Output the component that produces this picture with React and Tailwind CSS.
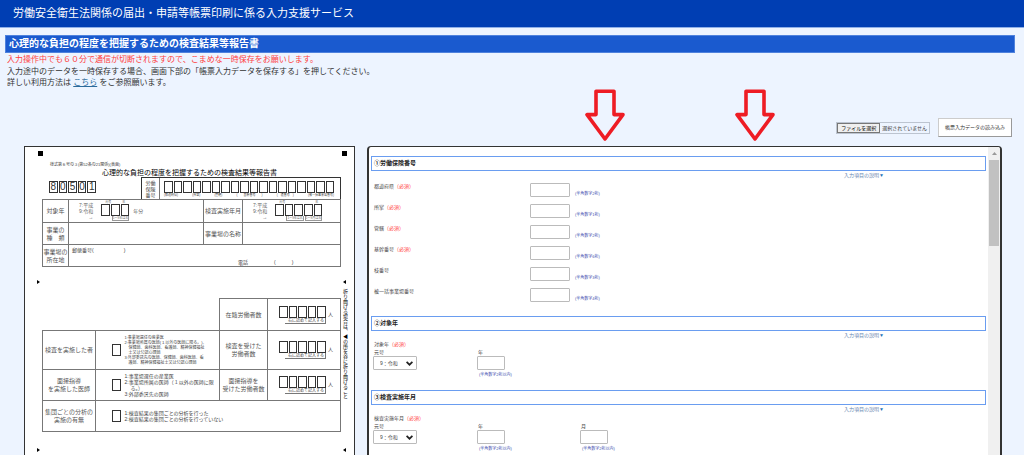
import React from 'react';

const INSURANCE_FIELDS = [
  { id: 'pref', label: '都道府県', required: true, hint: '(半角数字2桁)' },
  { id: 'shosho', label: '所掌', required: true, hint: '(半角数字1桁)' },
  { id: 'kankatsu', label: '管轄', required: true, hint: '(半角数字2桁)' },
  { id: 'kikan', label: '基幹番号', required: true, hint: '(半角数字6桁)' },
  { id: 'eda', label: '枝番号', required: false, hint: '(半角数字3桁)' },
  { id: 'ikkatsu', label: '被一括事業場番号', required: false, hint: '(半角数字4桁)' },
];

function DigitBoxes({ count, digits = '' }) {
  return (
    <div className="flex gap-px">
      {Array.from({ length: count }, (_, i) => (
        <span
          key={i}
          className="flex h-3 min-w-0 flex-1 items-center justify-center border border-[#333] text-[10px] leading-none text-[#333]"
        >
          {digits[i]}
        </span>
      ))}
    </div>
  );
}

function DownArrow({ className }) {
  return (
    <svg className={className} viewBox="0 0 40 53" fill="none" stroke="#ee1c24" strokeWidth="3.6" strokeLinejoin="round">
      <path d="M11 2.2H29V25.6H38L20 50L2 25.6H11Z" />
    </svg>
  );
}

function CornerSquares() {
  return (
    <div className="flex justify-between pr-[7px] pl-[13px] pt-1">
      <span className="size-[5px] bg-black"></span>
      <span className="size-[5px] bg-black"></span>
    </div>
  );
}

function FoldMarks() {
  return (
    <div className="flex justify-between pr-2 pl-3">
      <svg className="h-1 w-[3px]" viewBox="0 0 3 4"><path d="M0 0L3 2L0 4Z" /></svg>
      <svg className="h-1 w-[3px]" viewBox="0 0 3 4"><path d="M3 0L0 2L3 4Z" /></svg>
    </div>
  );
}

function EraBox({ count, children }) {
  return (
    <div className="flex items-center gap-2 pl-[10px] text-[5px] leading-[6px] text-[#666]">
      <div>
        7:平成<br />9:令和<br />
        <span className="block text-right">→</span>
      </div>
      <div className={count === 3 ? 'w-7' : 'w-[47px]'}>
        <div className="flex justify-between px-1 text-[3px] leading-[3px]">
          <span>元号</span>
          <span>年</span>
        </div>
        <DigitBoxes count={count} />
        <div className="flex justify-end gap-px text-[3px] leading-[4px]">
          <span className="border-x border-b border-[#999]">1〜9年は右</span>
          {count === 5 && <span className="border-x border-b border-[#999]">1〜9月は右</span>}
        </div>
      </div>
      {children}
    </div>
  );
}

function CountBox() {
  return (
    <div className="flex items-center gap-[2px] pl-[11px] text-[4px]">
      <div className="w-[47px]">
        <DigitBoxes count={5} />
        <div className="ml-[6px] border-r border-b border-[#777] pr-px text-right text-[4px] leading-[5px]">右に詰めて記入する</div>
      </div>
      <span className="text-[5px]">人</span>
    </div>
  );
}

function FormPreview() {
  const cell = 'border border-[#777] p-0';
  const label = 'border border-[#777] p-0 text-center font-normal text-[#555] text-[6px] leading-[8px] whitespace-nowrap';
  return (
    <section aria-label="帳票" className="w-[331px] shrink-0 overflow-hidden border border-b-0 border-[#333] bg-white text-[#444]">
      <CornerSquares />
      <p className="mt-[6px] pl-[25px] text-[4px] leading-[6px]">様式第６号の３(第52条の21関係)(表面)</p>
      <h3 className="text-center text-[7px] leading-[9px] text-black">心理的な負担の程度を把握するための検査結果等報告書</h3>

      <div className="ml-[17px] w-[299px]">
        <div className="flex items-start justify-between">
          <div className="mt-1 ml-[7px] w-[47px]">
            <DigitBoxes count={5} digits="80501" />
          </div>
          <div className="flex h-[22px] w-[200px] border-x border-t border-[#333]">
            <div className="flex w-[18px] items-center justify-center border-r border-[#777] text-[5px] leading-[6px]">
              労働<br />保険<br />番号
            </div>
            <div className="w-[174px] pt-[3px] pl-[4px]">
              <DigitBoxes count={18} />
              <div className="flex justify-between text-[3px] leading-[5px]">
                <span>(都道府県)</span>
                <span>(所掌)</span>
                <span>(管轄)</span>
                <span>(&emsp;&emsp;基幹番号&emsp;&emsp;)</span>
                <span>(&emsp;枝番号&emsp;)</span>
                <span>(被一括事業場番号)</span>
              </div>
            </div>
          </div>
        </div>

        <table className="w-full table-fixed border-collapse border border-[#333]">
          <colgroup>
            <col className="w-[26px]" />
            <col className="w-[135px]" />
            <col className="w-[39px]" />
            <col />
          </colgroup>
          <tbody>
            <tr className="h-[23px]">
              <th className={label}>対象年</th>
              <td className={cell}>
                <EraBox count={3}><span className="-ml-1">年分</span></EraBox>
              </td>
              <th className={label}>検査実施年月</th>
              <td className={cell}><EraBox count={5} /></td>
            </tr>
            <tr className="h-[22px]">
              <th className={label}>事業の<br />種　類</th>
              <td className={cell}></td>
              <th className={label}>事業場の名称</th>
              <td className={cell}></td>
            </tr>
            <tr className="h-[22px]">
              <th className={label}>事業場の<br />所在地</th>
              <td className={`${cell} px-[3px] text-[5px] leading-[8px]`} colSpan={3}>
                <div>郵便番号(<span className="inline-block w-[30px]"></span>)</div>
                <div className="mt-[4px] pl-[166px]">電話<span className="inline-block w-[26px]"></span>(<span className="inline-block w-4"></span>)</div>
              </td>
            </tr>
          </tbody>
        </table>
      </div>

      <div className="mt-[13px]"><FoldMarks /></div>

      <div className="mt-[5px] flex">
        <table className="mt-[9px] ml-[17px] w-[299px] table-fixed border-collapse">
          <colgroup>
            <col className="w-[53px]" />
            <col className="w-[28px]" />
            <col className="w-[96px]" />
            <col className="w-[48px]" />
            <col />
          </colgroup>
          <tbody>
            <tr className="h-8">
              <td colSpan={3}></td>
              <th className={label}>在籍労働者数</th>
              <td className={cell}><CountBox /></td>
            </tr>
            <tr className="h-[39px]">
              <th className={label}>検査を実施した者</th>
              <td className="border-y border-[#777] p-0"><span className="ml-4 block h-3 w-[9px] border border-[#333]"></span></td>
              <td className="border-y border-[#777] p-0 pl-px text-[4px] leading-[5px] whitespace-nowrap">
                1:事業場選任の産業医<br />
                2:事業場所属の医師(１以外の医師に限る。)、<br />
                &emsp;保健師、歯科医師、看護師、精神保健福祉<br />
                &emsp;士又は公認心理師<br />
                3:外部委託先の医師、保健師、歯科医師、看<br />
                &emsp;護師、精神保健福祉士又は公認心理師
              </td>
              <th className={label}>検査を受けた<br />労働者数</th>
              <td className={cell}><CountBox /></td>
            </tr>
            <tr className="h-[31px]">
              <th className={label}>面接指導<br />を実施した医師</th>
              <td className="border-y border-[#777] p-0"><span className="ml-4 block h-3 w-[9px] border border-[#333]"></span></td>
              <td className="border-y border-[#777] p-0 pl-px text-[5px] leading-[6px] whitespace-nowrap">
                1:事業場選任の産業医<br />
                2:事業場所属の医師（１以外の医師に限<br />
                &emsp;&thinsp;る。）<br />
                3:外部委託先の医師
              </td>
              <th className={label}>面接指導を<br />受けた労働者数</th>
              <td className={cell}><CountBox /></td>
            </tr>
            <tr className="h-[31px]">
              <th className={label}>集団ごとの分析の<br />実施の有無</th>
              <td className="border-y border-[#777] p-0"><span className="ml-4 block h-3 w-[9px] border border-[#333]"></span></td>
              <td colSpan={3} className="border-y border-r border-[#777] p-0 pl-px text-[5px] leading-[6px]">
                1:検査結果の集団ごとの分析を行った<br />
                2:検査結果の集団ごとの分析を行っていない
              </td>
            </tr>
          </tbody>
        </table>
        <p className="ml-px text-[5px] leading-[6px] whitespace-nowrap text-black [writing-mode:vertical-rl]">折り曲げる場合は、◀の所を谷に折り曲げること</p>
      </div>

      <div className="mt-4"><FoldMarks /></div>
    </section>
  );
}

function SectionTitle({ children }) {
  return (
    <>
      <h3 className="h-[15px] border border-[#6a9df0] pl-[2px] text-[6px] leading-[13px] font-bold text-[#222]">{children}</h3>
      <div className="flex justify-end pr-[102px] text-[5px] leading-[8px]">
        <a href="#help" className="text-[#6585b0]">入力項目の説明<span className="text-[#2474b8]">▼</span></a>
      </div>
    </>
  );
}

function Required() {
  return <span className="text-[#ff4040]">（必須）</span>;
}

function EraSelect({ id }) {
  return (
    <div className="w-[103px]">
      <label htmlFor={id} className="block pl-px leading-[8px]">元号</label>
      <div className="relative w-11">
        <select id={id} className="block h-[14px] w-full appearance-none rounded-[1px] border border-[#bbb] bg-white pl-[6px] text-[5px] leading-[12px]">
          <option>9：令和</option>
        </select>
        <svg className="pointer-events-none absolute top-[5px] right-1 h-[5px] w-[7px]" viewBox="0 0 7 5" fill="none" stroke="#222" strokeWidth="1.7">
          <path d="M0.6 0.8L3.5 3.7L6.4 0.8" />
        </svg>
      </div>
    </div>
  );
}

function SmallField({ id, label }) {
  return (
    <div className="w-[103px]">
      <label htmlFor={id} className="block pl-[2px] leading-[8px]">{label}</label>
      <input id={id} type="text" className="ml-px block h-[14px] w-7 rounded-[1px] border border-[#bbb] bg-white" />
      <p className="mt-[2px] pl-[3px] text-[4px] leading-[6px] text-[#4450b0]">(半角数字2桁以内)</p>
    </div>
  );
}

function InputPanel() {
  return (
    <section aria-label="入力項目" className="flex min-w-0 flex-1 overflow-hidden rounded-t-[4px] border-x-2 border-t border-[#333] bg-white">
      <div className="min-w-0 flex-1 px-[2px] pt-[9px] text-[5px] text-[#444]">
        <SectionTitle>①労働保険番号</SectionTitle>
        <div className="pt-1 pl-[3px]">
          {INSURANCE_FIELDS.map((f) => (
            <div key={f.id} className="flex h-[21px] items-start">
              <label htmlFor={f.id} className="w-[156px] leading-[6px]">
                {f.label}
                {f.required && <Required />}
              </label>
              <input id={f.id} type="text" className="h-[14px] w-10 rounded-[1px] border border-[#bbb] bg-white" />
              <span className="mt-2 ml-[5px] text-[4px] leading-[6px] text-[#4450b0]">{f.hint}</span>
            </div>
          ))}
        </div>

        <div className="mt-[7px]">
          <SectionTitle>②対象年</SectionTitle>
          <fieldset className="mt-px pl-[2px]">
            <legend className="pl-px leading-[8px]">対象年<Required /></legend>
            <div className="flex">
              <EraSelect id="era-target" />
              <SmallField id="year-target" label="年" />
            </div>
          </fieldset>
        </div>

        <div className="mt-3">
          <SectionTitle>③検査実施年月</SectionTitle>
          <fieldset className="mt-px pl-[2px]">
            <legend className="pl-px leading-[8px]">検査実施年月<Required /></legend>
            <div className="flex">
              <EraSelect id="era-exam" />
              <SmallField id="year-exam" label="年" />
              <SmallField id="month-exam" label="月" />
            </div>
          </fieldset>
        </div>
      </div>

      {/* Scrollbar */}
      <div className="flex w-3 flex-col items-center bg-[#f0f0f0]">
        <svg className="mt-[5px] h-[3px] w-[5px]" viewBox="0 0 5 3" fill="#999"><path d="M0 3L2.5 0L5 3Z" /></svg>
        <div className="mt-[5px] h-[86px] w-[10px] bg-[#c1c1c1]"></div>
      </div>
    </section>
  );
}

export default function App() {
  return (
    <div lang="ja" className="flex h-screen flex-col overflow-hidden bg-[#edf4ff] font-['Liberation_Sans','Noto_Sans_CJK_JP',sans-serif] text-[#333]">
      <header className="border-b border-[#8fb0e8] bg-[#003eb3] px-[13px]">
        <h1 className="text-[11px] leading-[27px] text-white">労働安全衛生法関係の届出・申請等帳票印刷に係る入力支援サービス</h1>
      </header>

      <div className="mx-[5px] mt-[7px]">
        <h2 className="mr-1 border border-[#4f82dd] bg-[#1a5acf] pl-[3px] text-[10px] leading-4 font-bold text-white">
          心理的な負担の程度を把握するための検査結果等報告書
        </h2>
        <div className="pt-px pl-[2px] text-[8px]">
          <p className="leading-[12px] text-[#ff4040]">入力操作中でも６０分で通信が切断されますので、こまめな一時保存をお願いします。</p>
          <p className="leading-[11px]">入力途中のデータを一時保存する場合、画面下部の「帳票入力データを保存する」を押してください。</p>
          <p className="leading-[11px]">
            詳しい利用方法は <a href="#guide" className="text-[#2b6a9b] underline">こちら</a> をご参照願います。
          </p>
        </div>
      </div>

      {/* File toolbar */}
      <div className="relative mt-[30px] mr-3 flex items-center justify-end gap-2">
        <label className="flex items-center gap-[2px] border border-[#bcc4d0] pr-[2px] text-[5px] leading-[8px]">
          <span className="border border-[#777] bg-[#efefef] px-[3px] text-black">ファイルを選択</span>
          選択されていません
          <input type="file" className="sr-only" />
        </label>
        <button type="button" className="h-[19px] border border-[#ccc] border-r-[#999] border-b-[#999] bg-white px-[6px] text-[5px]">
          帳票入力データの読み込み
        </button>
        <DownArrow className="absolute top-[-29px] left-[57.8%] w-10" />
        <DownArrow className="absolute top-[-29px] left-[72.6%] w-10" />
      </div>

      <main className="mt-[9px] flex min-h-0 flex-1 gap-3 pr-[22px] pl-6">
        <FormPreview />
        <InputPanel />
      </main>
    </div>
  );
}
